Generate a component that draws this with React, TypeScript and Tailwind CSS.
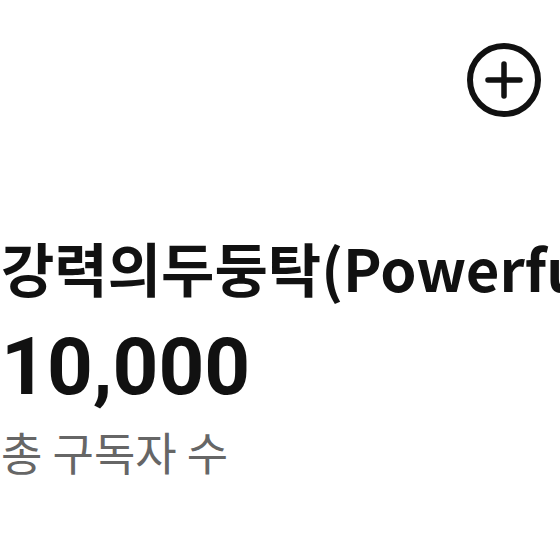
import React from 'react';

function PlusCircle() {
  return (
    <svg width="74" height="74" viewBox="0 0 74 74" fill="none" stroke="#111" strokeLinecap="round">
      <circle cx="37" cy="37" r="34" strokeWidth="6" />
      <path d="M21 37h32M37 21v32" strokeWidth="5.5" />
    </svg>
  );
}

export default function App() {
  return (
    <div className="w-[560px] h-[560px] bg-white overflow-hidden flex flex-col">
      {/* top bar */}
      <div className="flex justify-end pt-[43px] pr-[19px]">
        <PlusCircle />
      </div>

      {/* channel info */}
      <div className="mt-[115px] pl-[1px] flex flex-col">
        <h1 className="whitespace-nowrap text-[58px] leading-[70px] font-bold text-[#111] [font-family:'Noto_Sans_CJK_KR','Noto_Sans',sans-serif]">
          강력의두둥탁(Powerful Dudungtak)
        </h1>
        <p className="mt-[19px] text-[80px] leading-[92px] font-bold text-[#111] [font-family:Roboto,'Noto_Sans_CJK_KR',sans-serif]">
          10,000
        </p>
        <p className="mt-[11px] text-[45px] leading-[56px] text-[#666] [font-family:'Noto_Sans_CJK_KR',sans-serif]">
          총 구독자 수
        </p>
      </div>
    </div>
  );
}
